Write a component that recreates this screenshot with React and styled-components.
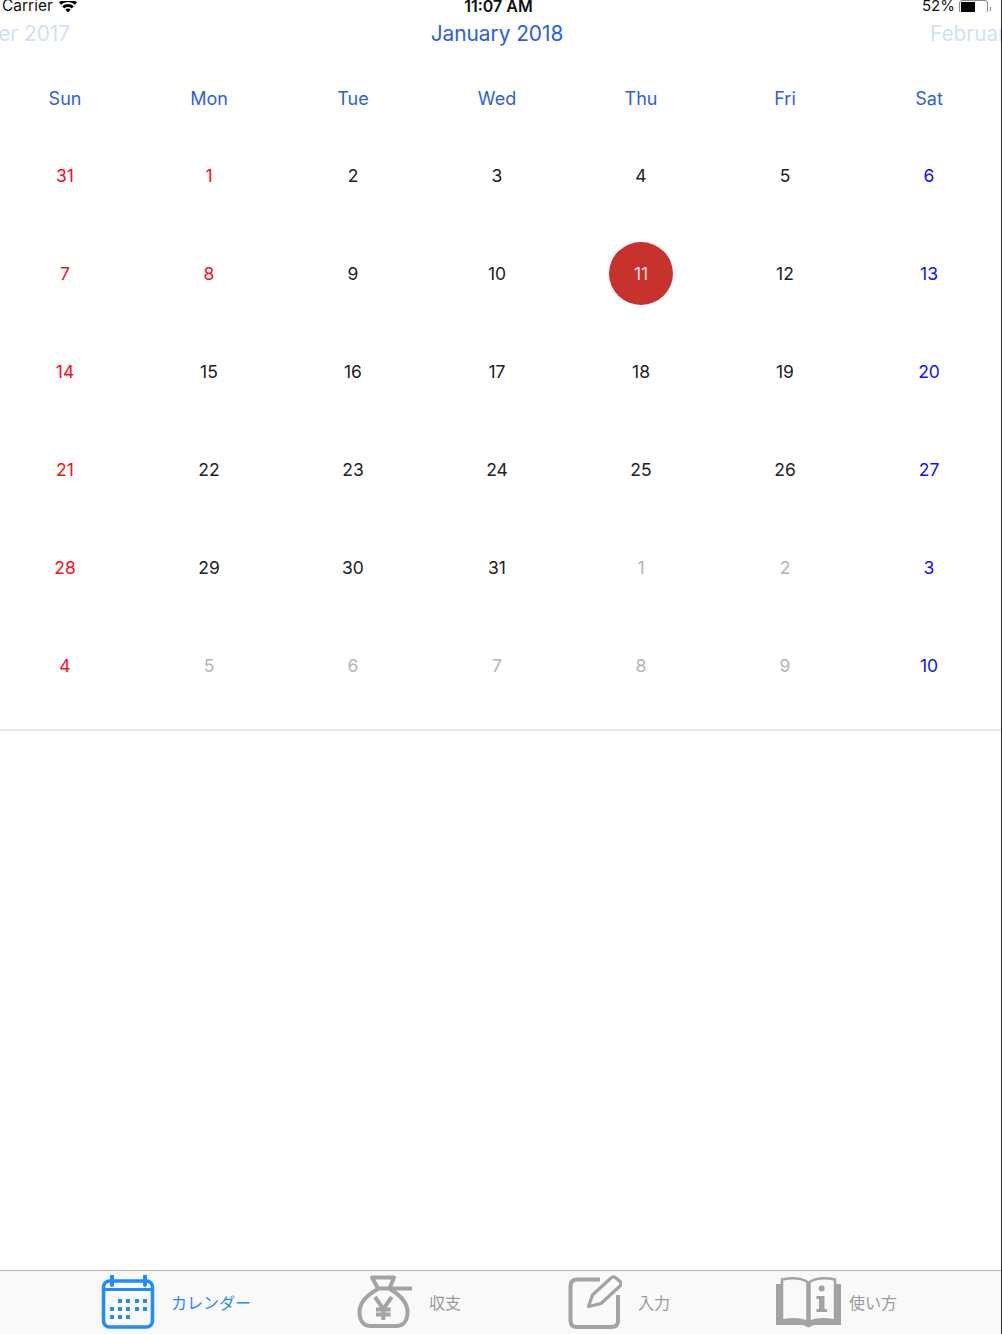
import styled, { createGlobalStyle } from 'styled-components';

const GlobalStyle = createGlobalStyle`
    html, body {
        margin: 0;
        padding: 0;
        background: #fff;
    }
    body {
        font-family: Inter, "Noto Sans CJK JP", sans-serif;
    }
`

const weeks = [
    [31, 1, 2, 3, 4, 5, 6],
    [7, 8, 9, 10, 11, 12, 13],
    [14, 15, 16, 17, 18, 19, 20],
    [21, 22, 23, 24, 25, 26, 27],
    [28, 29, 30, 31, 1, 2, 3],
    [4, 5, 6, 7, 8, 9, 10],
]
const weekdays = ['Sun', 'Mon', 'Tue', 'Wed', 'Thu', 'Fri', 'Sat']

const dayTone = (week, col) => {
    if (col === 0) return 'sunday'
    if (col === 6) return 'saturday'
    if (week === 0 && col === 1) return 'sunday'
    if (week === 1 && col === 1) return 'sunday'
    if (week === 4 && col >= 4) return 'muted'
    if (week === 5 && col > 0) return 'muted'
    return 'normal'
}

const toneColors = {
    sunday: '#fc0d1b',
    saturday: '#0f12f5',
    muted: '#b4b4b4',
    normal: '#222222',
}

const WifiIcon = () => (
    <svg width="20" height="14" viewBox="0 0 20 14">
        <path d="M1 1.5 A13 13 0 0 1 19 1.5 L17 3.8 A10 10 0 0 0 3 3.8 Z" fill="#000" />
        <path d="M4.2 5.2 A8.5 8.5 0 0 1 15.8 5.2 L13.8 7.4 A5.6 5.6 0 0 0 6.2 7.4 Z" fill="#000" />
        <path d="M7.4 8.6 A4 4 0 0 1 12.6 8.6 L10 11.6 Z" fill="#000" />
    </svg>
)

const CalendarIcon = () => (
    <svg width="54" height="54" viewBox="0 0 54 54">
        <rect x="2.5" y="6" width="49" height="46" rx="6" fill="none" stroke="#1e8bff" strokeWidth="3.5" />
        <path d="M2.5 14.5 H51.5" stroke="#1e8bff" strokeWidth="3" />
        <path d="M11 1 V10 M44 1 V10" stroke="#1e8bff" strokeWidth="4" strokeLinecap="round" />
        <g fill="#1e8bff">
            {[19, 27, 36, 44].map(x => <rect key={x} x={x - 2} y="24" width="4" height="4" rx="0.6" />)}
            {[11, 19, 27, 36, 44].map(x => <rect key={x} x={x - 2} y="32" width="4" height="4" rx="0.6" />)}
            {[11, 19, 27].map(x => <rect key={x} x={x - 2} y="40" width="4" height="4" rx="0.6" />)}
        </g>
    </svg>
)

const BagIcon = () => (
    <svg width="56" height="54" viewBox="-1 0 56 54" fill="none" stroke="#a3a3a3">
        <path d="M14 2.5 H36 L31.5 13.5 H20 Z" strokeWidth="4" strokeLinejoin="round" />
        <path d="M31 13.5 H54" strokeWidth="4" />
        <path d="M20 14 C9 20 1.5 28 1.5 37 C1.5 46 6 51 13 51 H38 C45 51 49.5 46 49.5 37 C49.5 28 42 20 32 14" strokeWidth="4" />
        <path d="M17 22 L25.3 34 L33.7 22 M25.3 34 V45 M18 34.5 H32.5 M18 39.5 H32.5" strokeWidth="4" />
    </svg>
)

const PencilIcon = () => (
    <svg width="55" height="54" viewBox="-1 0 55 54" fill="none" stroke="#a3a3a3">
        <path d="M32 4.5 H9 Q2.5 4.5 2.5 11 V45.500 Q2.5 52 9 52 H43.500 Q50 52 50 45.500 V20" strokeWidth="4" />
        <path d="M20.500 31.500 L24.500 20 L43 3 Q45.500 0.800 48 3 L52 6.500 Q54 9 52 11 L33 28.500 Z" strokeWidth="3.2" strokeLinejoin="round" />
    </svg>
)

const BookIcon = () => (
    <svg width="65" height="54" viewBox="0 0 65 54">
        <path d="M0 9 H65 V50 H38 L32.500 52.500 L27 50 H0 Z" fill="#a3a3a3" />
        <path d="M6 4.500 C16 2.500 26 3.500 31.500 7 V47 C26 44 16 43.500 6 45.500 Z" fill="#f9f9f9" stroke="#a3a3a3" strokeWidth="2.500" />
        <path d="M59 4.500 C49 2.500 39 3.500 33.500 7 V47 C39 44 49 43.500 59 45.500 Z" fill="#f9f9f9" stroke="#a3a3a3" strokeWidth="2.500" />
        <circle cx="45.700" cy="13.500" r="3" fill="#a3a3a3" />
        <path d="M40.500 21 H48.500 V34 H51 V37 H40.500 V34 H43 V24 H40.500 Z" fill="#a3a3a3" />
    </svg>
)

const tabs = [
    { label: 'カレンダー', icon: <CalendarIcon />, gap: 16, active: true },
    { label: '収支', icon: <BagIcon />, gap: 16 },
    { label: '入力', icon: <PencilIcon />, gap: 16 },
    { label: '使い方', icon: <BookIcon />, gap: 8 },
]

const App = () => {
    return (
        <Page>
            <GlobalStyle />
            <StatusBar>
                <Carrier>Carrier <WifiIcon /></Carrier>
                <Clock>11:07 AM</Clock>
                <Power>
                    52%
                    <Battery><BatteryLevel /></Battery>
                    <BatteryTip />
                </Power>
            </StatusBar>
            <MonthBar>
                <SideMonth $side="left">December 2017</SideMonth>
                <CurrentMonth>January 2018</CurrentMonth>
                <SideMonth $side="right">February 2018</SideMonth>
            </MonthBar>
            <WeekRow>
                {weekdays.map(name => <Weekday key={name}>{name}</Weekday>)}
            </WeekRow>
            <DayGrid>
                {weeks.map((week, w) => week.map((day, c) => (
                    <Day key={`${w}-${c}`} $tone={dayTone(w, c)} $today={w === 1 && c === 4}>
                        <span>{day}</span>
                    </Day>
                )))}
            </DayGrid>
            <Spacer />
            <TabBar>
                {tabs.map(tab => (
                    <Tab key={tab.label} $active={tab.active} $gap={tab.gap}>
                        {tab.icon}
                        <span>{tab.label}</span>
                    </Tab>
                ))}
            </TabBar>
        </Page>
    )
}

const Page = styled.div`
    width: 1002px;
    height: 1334px;
    box-sizing: border-box;
    border-right: 1px solid #2a2a2a;
    display: flex;
    flex-direction: column;
    overflow: hidden;
    background: #fff;
`

const StatusBar = styled.div`
    height: 12px;
    box-sizing: border-box;
    flex: none;
    overflow: hidden;
    display: grid;
    grid-template-columns: 1fr auto 1fr;
    align-items: end;
    padding: 0 10px 2px 2px;
    font-size: 15.5px;
    line-height: 12px;
    color: #111;
`

const Carrier = styled.div`
    display: flex;
    align-items: flex-end;
    gap: 5px;
    svg {
        margin-bottom: -3px;
    }
`

const Clock = styled.div`
    font-weight: 600;
    font-size: 16px;
    padding-left: 4px;
`

const Power = styled.div`
    display: flex;
    align-items: flex-end;
    justify-content: flex-end;
    gap: 4px;
    font-size: 15px;
`

const Battery = styled.div`
    width: 29px;
    height: 14px;
    box-sizing: border-box;
    border: 1px solid #8a8a8a;
    border-radius: 3px;
    padding: 1px;
    margin-bottom: -2px;
`

const BatteryLevel = styled.div`
    width: 14px;
    height: 100%;
    background: #000;
`

const BatteryTip = styled.div`
    width: 1px;
    height: 4px;
    margin: 0 0 1px -2px;
    background: #8a8a8a;
`

const MonthBar = styled.div`
    height: 42px;
    flex: none;
    display: grid;
    grid-template-columns: 70px 1fr 71px;
    align-items: center;
    font-size: 20.8px;
    white-space: nowrap;
`

const SideMonth = styled.div`
    color: #d2defa;
    display: flex;
    justify-content: ${props => props.$side === 'left' ? 'flex-end' : 'flex-start'};
    overflow: hidden;
`

const CurrentMonth = styled.div`
    color: #2b5fdf;
    text-align: center;
    padding-right: 6px;
`

const WeekRow = styled.div`
    height: 46px;
    padding-top: 21px;
    flex: none;
    display: grid;
    grid-template-columns: repeat(7, 130px);
    column-gap: 14px;
    align-items: center;
`

const Weekday = styled.div`
    text-align: center;
    font-size: 18px;
    color: #2b5fdf;
`

const DayGrid = styled.div`
    flex: none;
    display: grid;
    grid-template-columns: repeat(7, 130px);
    grid-auto-rows: 98px;
    column-gap: 14px;
    padding: 0 0 15px;
    margin-top: 5px;
    margin-right: -1px;
    border-bottom: 2px solid #e6e6e6;
`

const Day = styled.div`
    display: flex;
    align-items: center;
    justify-content: center;
    font-size: 17.5px;
    color: ${props => props.$today ? '#f4dedd' : toneColors[props.$tone]};
    span {
        width: 64px;
        height: 63px;
        display: flex;
        align-items: center;
        justify-content: center;
        border-radius: 50%;
        background: ${props => props.$today ? '#c8322e' : 'transparent'};
    }
`

const Spacer = styled.div`
    flex: 1;
`

const TabBar = styled.div`
    height: 63px;
    flex: none;
    border-top: 1px solid #b2b2b2;
    background: #f9f9f9;
    display: flex;
    align-items: flex-start;
    gap: 106px;
    padding-left: 101px;
    overflow: hidden;
`

const Tab = styled.div`
    display: flex;
    align-items: center;
    gap: ${props => props.$gap}px;
    margin-top: 4px;
    font-size: 16px;
    color: ${props => props.$active ? '#1e8bff' : '#9a9a9a'};
`

export default App
